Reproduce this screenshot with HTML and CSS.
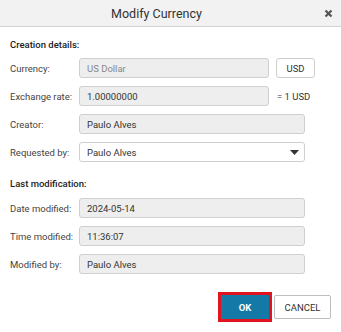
FILE: index.html
```html
<!DOCTYPE html>
<html lang="en">
<head>
    <meta charset="UTF-8">
    <title>Modify Currency</title>
    <link rel="stylesheet" href="styles.css">
</head>
<body>
    <div class="dialog">
        <div class="dialog-header">
            <span class="dialog-title">Modify Currency</span>
            <span class="close">
                <svg width="9" height="9" viewBox="0 0 9 9"><path d="M1.5 1.5 L7.5 7.5 M7.5 1.5 L1.5 7.5" stroke="#555" stroke-width="2.2"/></svg>
            </span>
        </div>

        <div class="dialog-body">
            <div class="section-title">Creation details:</div>
            <div class="row">
                <label>Currency:</label>
                <div class="field short disabled muted">US Dollar</div>
                <div class="code-box">USD</div>
            </div>
            <div class="row">
                <label>Exchange rate:</label>
                <div class="field short disabled">1.00000000</div>
                <span class="suffix">= 1 USD</span>
            </div>
            <div class="row">
                <label>Creator:</label>
                <div class="field disabled">Paulo Alves</div>
            </div>
            <div class="row">
                <label>Requested by:</label>
                <div class="field select">
                    <span>Paulo Alves</span>
                    <svg class="caret" width="9" height="5" viewBox="0 0 9 5"><path d="M0 0 H9 L4.5 5 Z" fill="#333"/></svg>
                </div>
            </div>

            <div class="section-title second">Last modification:</div>
            <div class="row">
                <label>Date modified:</label>
                <div class="field disabled">2024-05-14</div>
            </div>
            <div class="row">
                <label>Time modified:</label>
                <div class="field disabled">11:36:07</div>
            </div>
            <div class="row">
                <label>Modified by:</label>
                <div class="field disabled">Paulo Alves</div>
            </div>
        </div>

        <div class="dialog-footer">
            <button class="btn btn-ok">OK</button>
            <button class="btn btn-cancel">CANCEL</button>
        </div>
    </div>
</body>
</html>
```

FILE: styles.css
```css
body { margin: 0; padding: 0; background: #fff; font-family: Roboto, "Liberation Sans", Arial, sans-serif; color: #333; }
.dialog { width: 341px; height: 332px; background: #fff; }
.dialog-header { height: 26px; padding-right: 28px; background: #f2f2f2; border-bottom: 1px solid #d4d4d4; display: flex; align-items: center; justify-content: center; position: relative; }
.dialog-title { font-size: 12.5px; color: #333; }
.close { position: absolute; right: 8px; top: 9px; width: 9px; height: 9px; display: flex; }
.dialog-body { padding: 0 10px; }
.section-title { font-size: 9.5px; font-weight: 500; color: #222; line-height: 14px; margin-top: 11px; margin-bottom: 6px; }
.section-title.second { margin-top: 15px; margin-bottom: 7px; }
.row { display: flex; align-items: center; height: 20px; margin-bottom: 8px; font-size: 9.5px; }
.row label { width: 69px; color: #444; flex-shrink: 0; white-space: nowrap; }
.field { box-sizing: border-box; width: 226px; height: 20px; border: 1px solid #cfcfcf; border-radius: 3px; padding: 0 7px; display: flex; align-items: center; color: #333; }
.field.short { width: 190px; }
.field.disabled { background: #eeeeee; }
.field.muted { color: #888; }
.field.select { background: #fff; justify-content: space-between; padding-right: 5px; }
.caret { display: block; }
.code-box { box-sizing: border-box; width: 39px; height: 20px; margin-left: 7px; border: 1px solid #cfcfcf; border-radius: 3px; display: flex; align-items: center; justify-content: center; color: #333; }
.suffix { margin-left: 8px; color: #333; }
.dialog-footer { display: flex; justify-content: flex-end; gap: 5px; padding: 13px 10px 0 0; }
.btn { box-sizing: border-box; height: 24px; font-family: Roboto, "Liberation Sans", Arial, sans-serif; font-size: 9.5px; border-radius: 0; cursor: pointer; }
.btn-ok { width: 48px; background: #1479a6; color: #fff; border: none; font-weight: bold; outline: 3px solid #e0141e; }
.btn-cancel { width: 57px; background: #fff; color: #333; border: 1px solid #bdbdbd; border-radius: 2px; }
```
